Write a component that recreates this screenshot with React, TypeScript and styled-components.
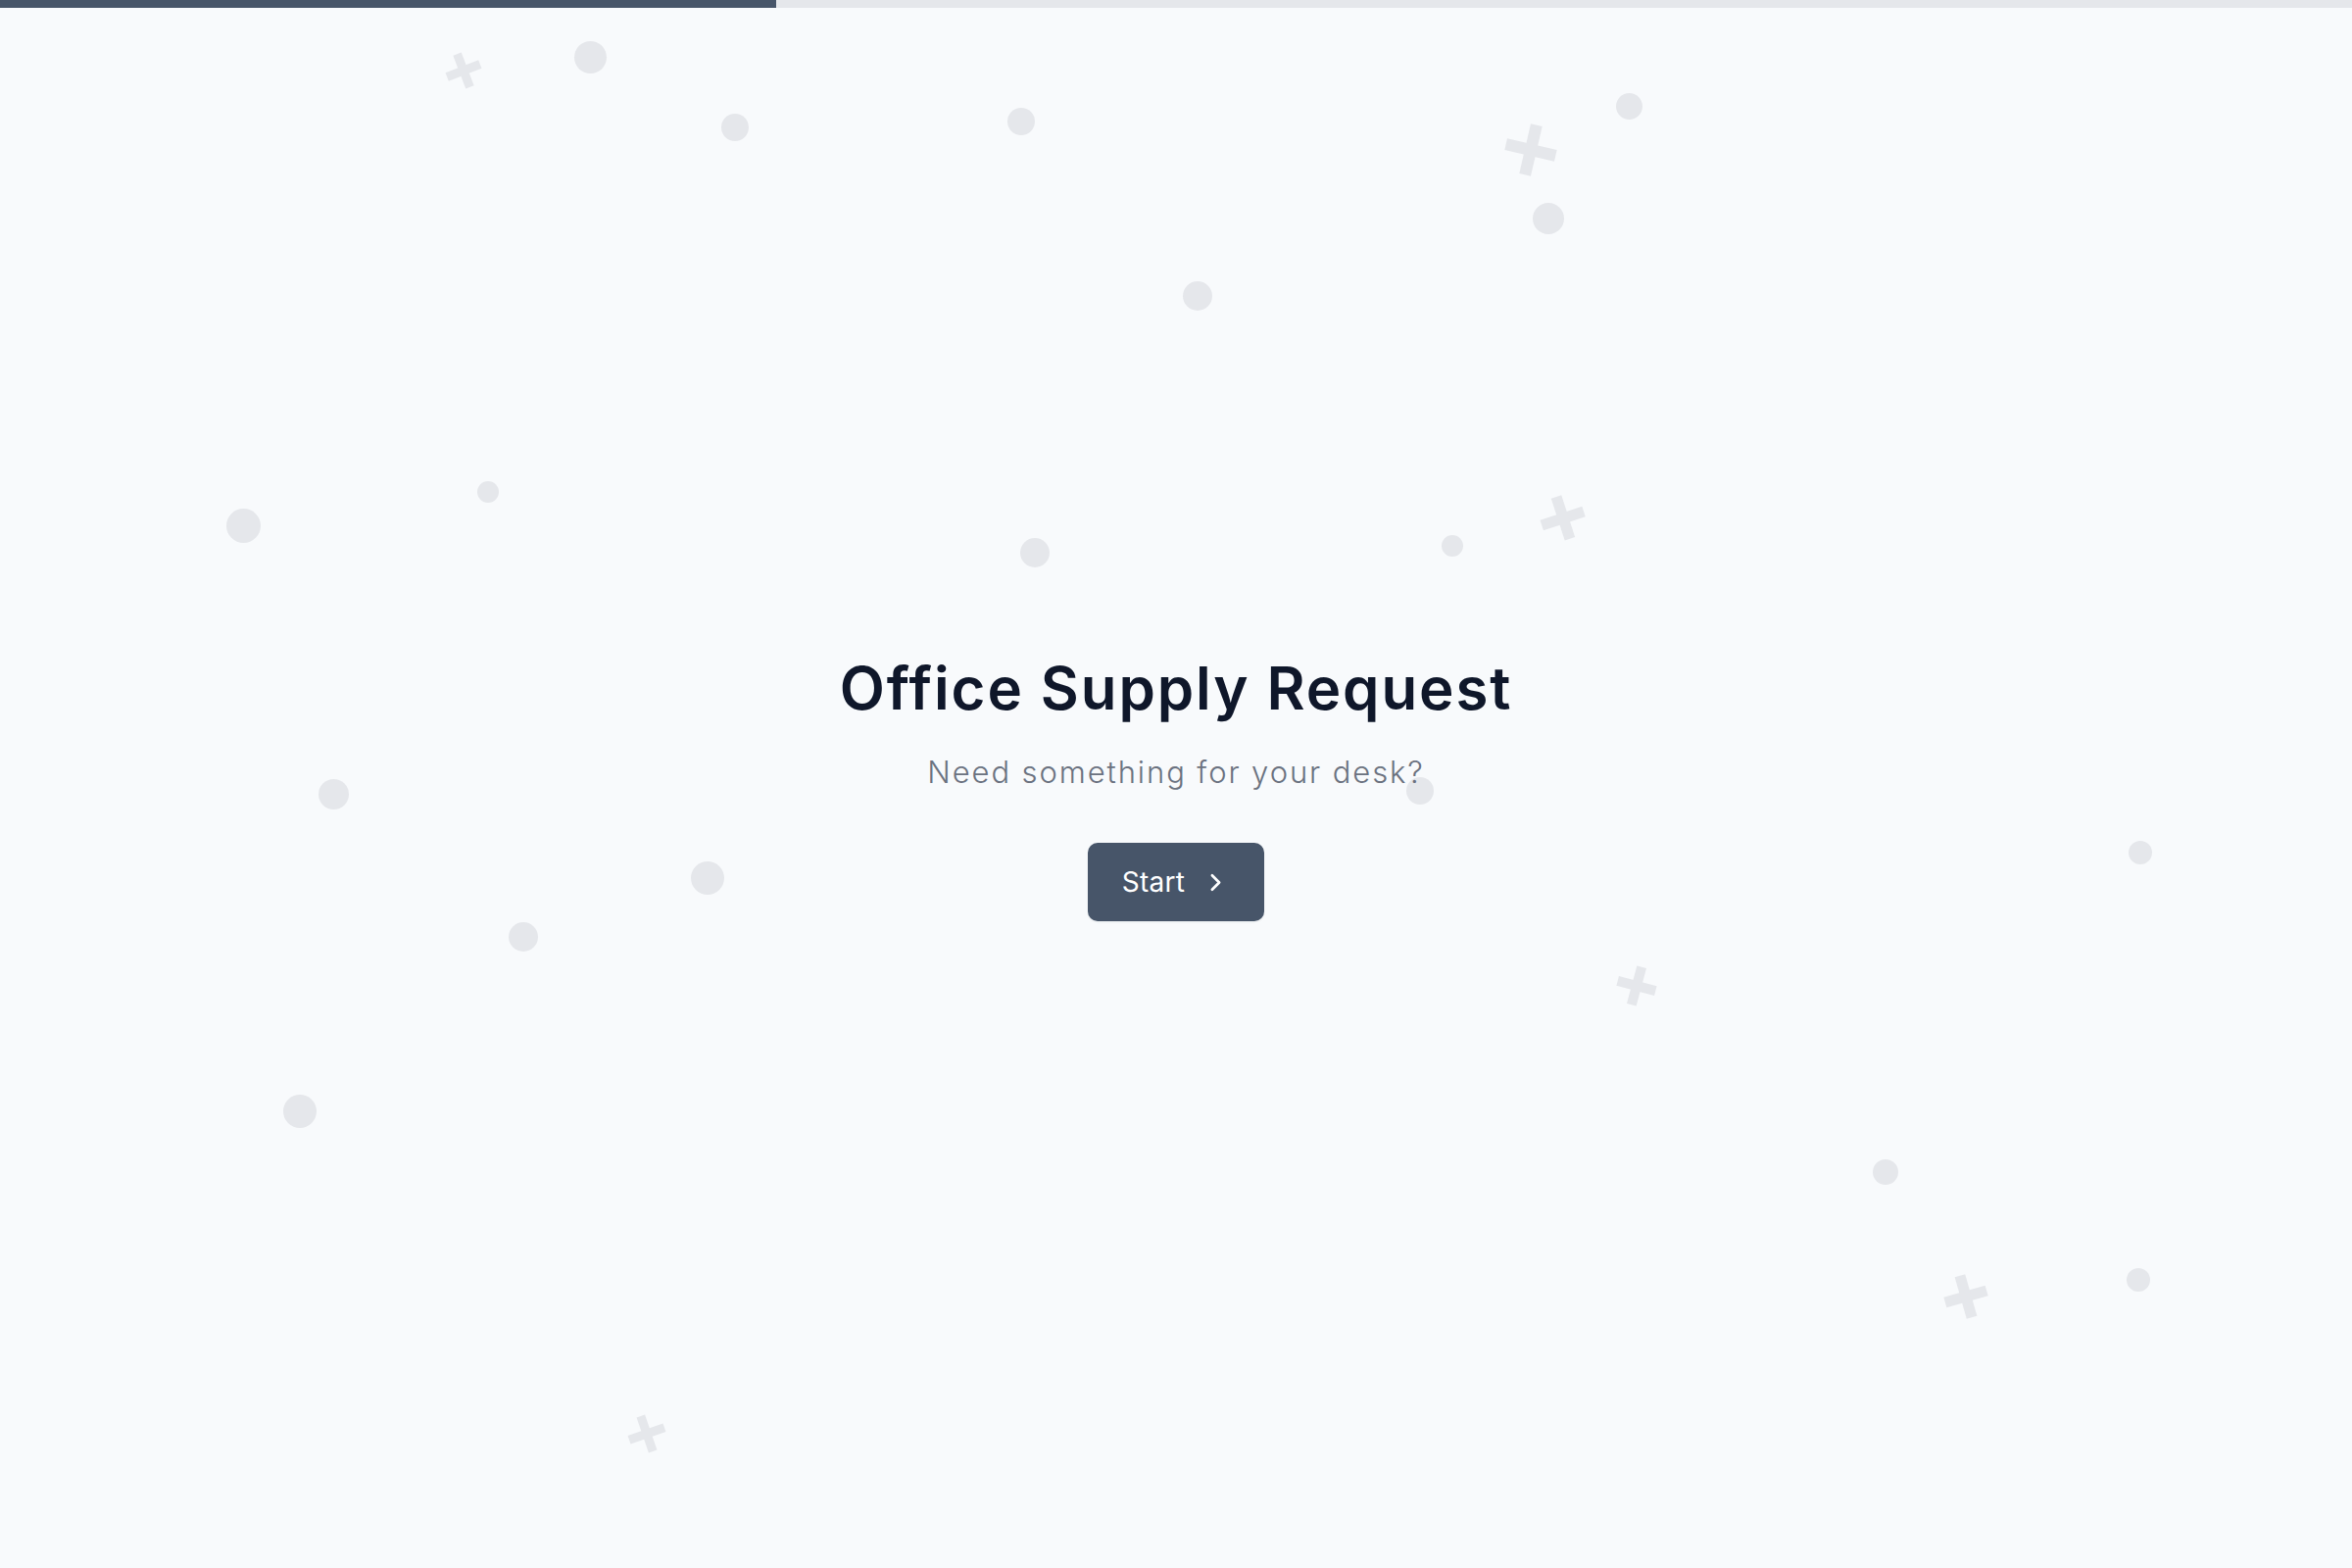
import React from "react";
import styled, { createGlobalStyle } from "styled-components";
import { ChevronRight } from "lucide-react";

type Dot = { x: number; y: number; d: number };
type Cross = { x: number; y: number; s: number; r: number };

// scattered confetti behind the intro card (centre points, px)
const dots: Dot[] = [
  { x: 602, y: 58, d: 33 },
  { x: 750, y: 130, d: 28 },
  { x: 1042, y: 124, d: 28 },
  { x: 1662, y: 108, d: 27 },
  { x: 1580, y: 223, d: 32 },
  { x: 1222, y: 302, d: 30 },
  { x: 248, y: 536, d: 35 },
  { x: 498, y: 502, d: 22 },
  { x: 1056, y: 564, d: 30 },
  { x: 1482, y: 557, d: 22 },
  { x: 340, y: 810, d: 31 },
  { x: 1449, y: 807, d: 28 },
  { x: 722, y: 896, d: 34 },
  { x: 534, y: 956, d: 30 },
  { x: 2184, y: 870, d: 24 },
  { x: 306, y: 1134, d: 34 },
  { x: 1924, y: 1196, d: 26 },
  { x: 2182, y: 1306, d: 24 },
];

const crosses: Cross[] = [
  { x: 473, y: 72, s: 36, r: -21 },
  { x: 1562, y: 153, s: 52, r: 13 },
  { x: 1594, y: 528, s: 45, r: -18 },
  { x: 1670, y: 1006, s: 40, r: 15 },
  { x: 2006, y: 1323, s: 44, r: -16 },
  { x: 660, y: 1463, s: 38, r: -19 },
];

const GlobalStyle = createGlobalStyle`
  * { box-sizing: border-box; }
  html, body {
    margin: 0;
    padding: 0;
    background: #f8fafc;
  }
  body {
    font-family: Inter, "Open Sans", "DejaVu Sans", sans-serif;
    color: #0f172a;
  }
`;

const Page = styled.div`
  position: relative;
  min-height: 100vh;
  display: flex;
  flex-direction: column;
  overflow: hidden;
  background: #f8fafc;
`;

const ProgressTrack = styled.div`
  height: 8px;
  width: 100%;
  background: #e5e7eb;
  flex-shrink: 0;
  position: relative;
  z-index: 2;
`;

const ProgressFill = styled.div`
  height: 100%;
  background: #475569;
`;

const Confetti = styled.div`
  position: absolute;
  inset: 0;
  pointer-events: none;
  z-index: 0;
`;

const Circle = styled.span<{ $d: number }>`
  position: absolute;
  width: ${(p) => p.$d}px;
  height: ${(p) => p.$d}px;
  margin: ${(p) => -p.$d / 2}px 0 0 ${(p) => -p.$d / 2}px;
  border-radius: 50%;
  background: #e5e7eb;
`;

const Plus = styled.span<{ $s: number; $r: number }>`
  position: absolute;
  width: ${(p) => p.$s}px;
  height: ${(p) => p.$s}px;
  margin: ${(p) => -p.$s / 2}px 0 0 ${(p) => -p.$s / 2}px;
  transform: rotate(${(p) => p.$r}deg);

  &::before,
  &::after {
    content: "";
    position: absolute;
    background: #e5e7eb;
  }
  &::before {
    left: 0;
    right: 0;
    top: 50%;
    height: ${(p) => Math.round(p.$s * 0.24)}px;
    transform: translateY(-50%);
  }
  &::after {
    top: 0;
    bottom: 0;
    left: 50%;
    width: ${(p) => Math.round(p.$s * 0.24)}px;
    transform: translateX(-50%);
  }
`;

const Stage = styled.main`
  position: relative;
  z-index: 1;
  flex: 1;
  display: flex;
  flex-direction: column;
  align-items: center;
  justify-content: center;
  padding-top: 4px;
  text-align: center;
`;

const Title = styled.h1`
  margin: 0 0 38px;
  font-size: 60px;
  line-height: 1;
  font-weight: 600;
  letter-spacing: 1.9px;
  color: #0f172a;
`;

const Subtitle = styled.p`
  margin: 0 0 54px;
  font-size: 31px;
  line-height: 36px;
  font-weight: 300;
  letter-spacing: 1.9px;
  color: #6b7280;
`;

const StartButton = styled.button`
  display: inline-flex;
  align-items: center;
  gap: 17px;
  height: 80px;
  padding: 0 35px 0 35px;
  border: none;
  border-radius: 10px;
  background: #475569;
  color: #ffffff;
  font-family: inherit;
  font-size: 28px;
  font-weight: 400;
  letter-spacing: 0.3px;
  cursor: pointer;
  box-shadow: 0 1px 2px rgba(15, 23, 42, 0.08);

  svg {
    flex-shrink: 0;
  }
`;

export default function App() {
  const progress = 0.33;

  return (
    <>
      <GlobalStyle />
      <Page>
        <ProgressTrack>
          <ProgressFill style={{ width: `${progress * 100}%` }} />
        </ProgressTrack>
        <Confetti>
          {dots.map((d, i) => (
            <Circle key={`d${i}`} $d={d.d} style={{ left: d.x, top: d.y }} />
          ))}
          {crosses.map((c, i) => (
            <Plus key={`c${i}`} $s={c.s} $r={c.r} style={{ left: c.x, top: c.y }} />
          ))}
        </Confetti>
        <Stage>
          <Title>Office Supply Request</Title>
          <Subtitle>Need something for your desk?</Subtitle>
          <StartButton type="button">
            Start
            <ChevronRight size={29} strokeWidth={2.2} />
          </StartButton>
        </Stage>
      </Page>
    </>
  );
}
